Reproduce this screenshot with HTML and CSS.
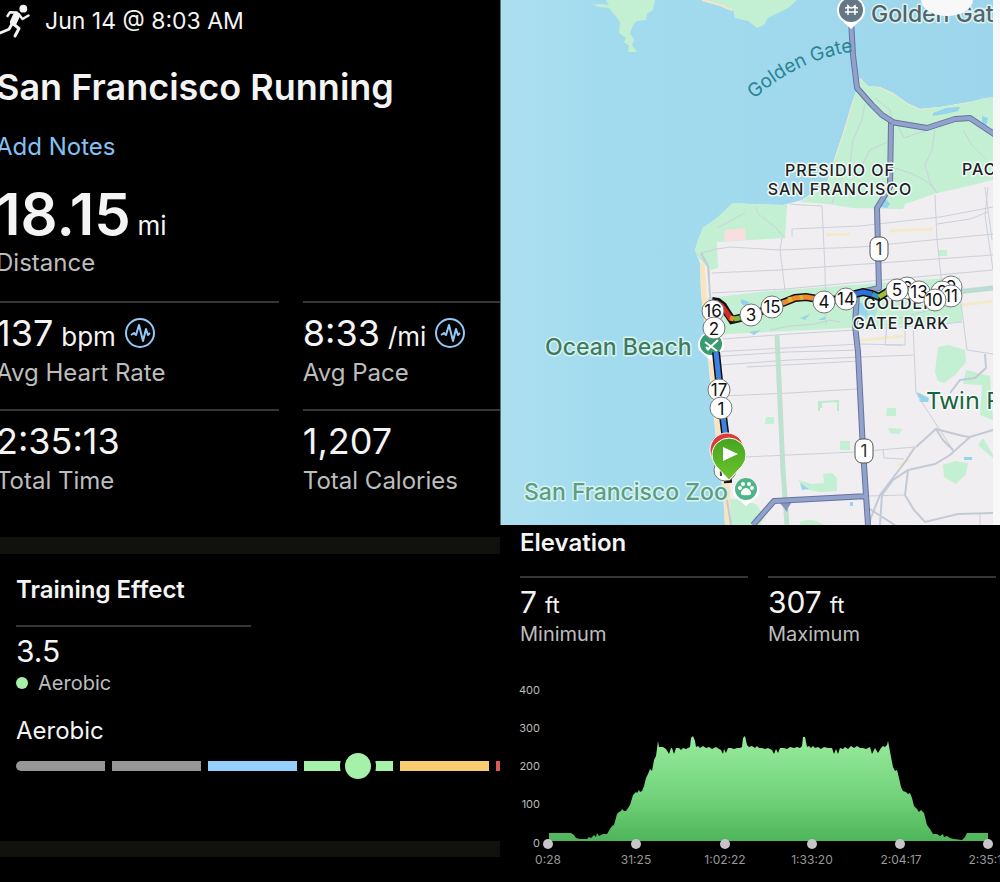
FILE: index.html
```html
<!DOCTYPE html>
<html lang="en">
<head>
    <meta charset="UTF-8">
    <meta name="viewport" content="width=device-width, initial-scale=1.0">
    <title>San Francisco Running</title>
    <link rel="stylesheet" href="styles.css">
</head>
<body>

<div class="page">
    <div class="left">
        <section class="activity">
            <div class="date">
                <svg class="runner" viewBox="0 0 34 38" fill="none" stroke="currentColor" stroke-linecap="round" stroke-linejoin="round">
                    <circle cx="27.3" cy="6.7" r="3.9" fill="currentColor" stroke="none"/>
                    <path d="M20.5 13.5 L17.5 20" stroke-width="7"/>
                    <path d="M11.5 14 L14 10.2 L20.7 10.5" stroke-width="2.4"/>
                    <path d="M23 12.5 L26.5 17 L32.5 13.5" stroke-width="2.4"/>
                    <path d="M16.5 21 L13 27.3 L4 31" stroke-width="2.8"/>
                    <path d="M17.5 22 L23 26.5 L19 34" stroke-width="3"/>
                </svg>
                <span>Jun 14 @ 8:03 AM</span>
            </div>
            <h1>San Francisco Running</h1>
            <a class="notes" href="#">Add Notes</a>
            <div class="distance">18.15 <small>mi</small></div>
            <div class="label">Distance</div>

            <div class="stats">
                <div class="stat">
                    <div class="value">137 <small>bpm</small>
                        <svg class="pulse" viewBox="0 0 32 32">
                            <circle cx="16" cy="16" r="14"/>
                            <path d="M7 18 L10 16 L12 18 L15 8 L19 24 L22 12 L24 18 L26 16"/>
                        </svg>
                    </div>
                    <div class="label">Avg Heart Rate</div>
                </div>
                <div class="stat">
                    <div class="value">8:33 <small>/mi</small>
                        <svg class="pulse" viewBox="0 0 32 32">
                            <circle cx="16" cy="16" r="14"/>
                            <path d="M7 18 L10 16 L12 18 L15 8 L19 24 L22 12 L24 18 L26 16"/>
                        </svg>
                    </div>
                    <div class="label">Avg Pace</div>
                </div>
                <div class="stat">
                    <div class="value">2:35:13</div>
                    <div class="label">Total Time</div>
                </div>
                <div class="stat">
                    <div class="value">1,207</div>
                    <div class="label">Total Calories</div>
                </div>
            </div>
        </section>

        <section class="training">
            <h2>Training Effect</h2>
            <div class="effect">
                <div class="value small">3.5</div>
                <div class="label small"><i class="dot"></i>Aerobic</div>
            </div>
            <h3>Aerobic</h3>
            <div class="gauge">
                <div class="zone first"></div>
                <div class="zone"></div>
                <div class="zone blue"></div>
                <div class="zone green"><i class="knob"></i></div>
                <div class="zone yellow"></div>
                <div class="zone red"></div>
            </div>
        </section>
    </div>

    <div class="right">
        <svg class="map" viewBox="500 0 500 525">
            <defs>
                <linearGradient id="water">
                    <stop offset="0" stop-color="#acdff0"/>
                    <stop offset="0.2" stop-color="#a3dbee"/>
                    <stop offset="1" stop-color="#9dd6ec"/>
                </linearGradient>
                <linearGradient id="pin" x1="0" y1="0" x2="0" y2="1">
                    <stop offset="0" stop-color="#45a51f"/>
                    <stop offset="1" stop-color="#6cc42c"/>
                </linearGradient>
                <clipPath id="coast">
                    <path id="landShape" d="M860 78 L868 86 L880 87 L893 93 L907 103 L920 109 L940 107 L970 102 L985 98 L1000 97 V525 H725 L723 493 L718 460 L713 410 L708 360 L705 327 L701 293 L700 263 L695 250 L698 240 L703 228 L717 218 L733 203 L750 204 L783 205 L802 200 L827 183 L835 157 L843 133 L853 100 L858 86 Z"/>
                </clipPath>
                <path id="gateCurve" d="M754 99 Q800 58 858 51"/>
            </defs>

            <rect x="500" y="0" width="500" height="525" fill="url(#water)"/>

            <!-- headlands -->
            <g class="park">
                <path d="M606 0 L609 5 L600 4 L593 5 L600 7 L609 8 L617 18 L620 22 L619 33 L626 38 L624 42 L629 46 L628 52 L637 52 L632 45 L634 40 L630 33 L633 25 L637 21 L646 20 L647 14 L653 10 L655 0 Z"/>
                <path d="M702 0 L720 5 L733 10 L735 18 L748 21 L757 28 L764 25 L768 18 L780 12 L788 8 L797 0 Z"/>
            </g>
            <path d="M702 0 L720 5 L732 10" fill="none" stroke="#f3e5cf" stroke-width="2"/>

            <use href="#landShape" fill="#f0eef0"/>
            <g clip-path="url(#coast)">
                <g class="park">
                    <path d="M800 202 L827 204 L853 208 L903 209 L905 204 L937 193 L960 188 L993 180 V60 H820 V190 Z"/>
                    <path d="M690 190 H788 L785 238 L717 242 L718 268 L710 270 L690 250 Z"/>
                    <path d="M708 298 L760 292 L960 277 L962 322 L850 328 L706 335 Z"/>
                    <path d="M938 347 L948 345 L965 350 L966 362 L955 375 L944 383 L938 381 L935 372 Z"/>
                    <path d="M966 370 L990 376 L993 420 L980 415 L982 385 L963 384 Z"/>
                    <path d="M943 465 L955 461 L968 463 L966 474 L956 484 L944 477 Z"/>
                    <path d="M798 480 L812 484 L824 483 L823 474 L832 473 L837 478 L837 491 L820 492 L805 489 Z"/>
                    <path d="M723 498 L740 500 L756 504 L765 517 L760 525 H723 Z"/>
                    <path d="M887 408 h9 v8 h-10 Z M888 428 l14 1 -3 5 -9 -1 Z M840 441 h10 v9 h-10 Z M766 417 h8 v7 h-9 Z"/>
                    <path d="M938 250 h9 v6 h-9 Z M978 445 L993 458 V455 L983 438 Z M800 522 Q812 517 824 525 H800 Z"/>
                </g>
                <path d="M819 411 V402 L838 401 V411 M821 402 V408" fill="none" stroke="#bfe9cf" stroke-width="2"/>
                <path d="M725 230 l20 -2 1 12 -22 1 Z" fill="#f8dfdf"/>
                <path d="M853 100 L843 133 L835 157 L827 183 M858 78 L880 87 L893 93 L907 103 L920 109 L970 102" fill="none" stroke="#f3e5cf" stroke-width="2"/>
                <path d="M701 263 L703 293 L708 327 L712 360 L717 410 L722 460 L727 493 V525" fill="none" stroke="#f8e4be" stroke-width="7"/>
                <g fill="#94d4ec">
                    <path d="M933 113 L946 108 L960 107 L958 111 L945 114 L933 116 Z M982 116 l6 2 -2 8 -4 -4 Z M881 207 l4 -9 5 6 -3 4 Z"/>
                    <path d="M917 392 l12 6 -1 4 -8 0 Z M800 483 l9 6 -7 1 Z M850 502 h3 v4 h-3 Z M964 457 h8 v3 h-8 Z M741 299 l8 3 -3 6 -5 -5 Z"/>
                    <path d="M857 299 L866 307 L868 316 L857 314 Z M800 318 l10 -4 -5 6 Z M818 320 l8 -4 -1 4 Z M749 332 l12 -2 -7 5 Z"/>
                    <circle cx="868" cy="310" r="9" opacity="0.5"/>
                </g>
                <g class="yellow-road">
                    <path d="M826 235 L850 234 M890 231 L933 229 M962 305 L993 301 M897 466 L910 460 M855 341 L903 336"/>
                </g>

                <g class="street">
                    <path d="M792 237 V229 L860 226 L940 217 L993 207 M701 253 L717 249 L730 247 L780 250 L860 247 L993 234"/>
                    <path d="M712 273 L780 270 L993 255 M712 293 L785 289 L993 270"/>
                    <path d="M709 340 L790 334 L855 330 L943 324 L962 322 M712 352 L860 344 L903 345"/>
                    <path d="M708 357 L787 352 L860 350 M720 365 L790 360 L913 355 M722 396 L790 393 L857 389"/>
                    <path d="M747 367 L860 361 M745 457 L855 452 L915 447 M868 496 L904 495 M937 224 L970 219 L988 212"/>
                    <path d="M785 290 L780 250 L782 238 M822 206 L825 270 L826 325 M935 195 L937 240 L942 285 M985 187 L992 240"/>
                    <path d="M988 187 L985 215 L993 270 M913 325 L916 393 L936 424 L953 450 L952 455 M958 280 L967 350 L993 354"/>
                    <path d="M883 449 L884 458 L904 459 M980 513 V525 M887 325 L885 345 L905 345 V327"/>
                    <path d="M757 207 Q754 212 765 219 T785 238 M790 204 L802 205 L822 206 M717 228 L745 213 M697 253 L708 266 L710 275"/>
                    <path d="M865 104 L862 120 L853 140 L850 165 L838 185 L832 203 M875 98 L890 110 L892 122 M896 122 L904 138 L918 133 L935 128"/>
                    <path d="M935 130 L932 150 L925 165 L930 182 L937 193 M892 140 L870 150 L862 165 M895 168 Q930 178 937 193 M963 130 L972 145 L987 160"/>
                    <path d="M770 330 L790 326 L815 324 L830 320 L840 322 M900 318 L930 310 L950 305 L960 290"/>
                </g>
                <g class="road">
                    <path d="M985 354 L986 368 L975 378 L960 380 L950 393 M916 447 L937 428 M936 429 L963 436 L970 437 L993 430"/>
                    <path d="M970 437 L950 455 L935 464 L908 470 L893 480 L882 495 L880 525 M915 447 L905 462 L880 495 L868 525"/>
                    <path d="M908 470 L905 495 L914 510 L925 522 L958 514 L993 513 M868 508 L895 525 M936 429 L943 440 L953 450"/>
                    <path d="M727 500 L731 525 M701 253 L708 266 L710 295 L714 340"/>
                </g>
                <path d="M777 335 L783 470 L787 525" fill="none" stroke="#bfe2d0" stroke-width="5"/>
                <path d="M885 300 L993 288" fill="none" stroke="#bcdcd3" stroke-width="5"/>
                <path d="M779 502 L792 502 L788 508 L787 512 L784 508 Z" fill="#8496c2"/>

                <path class="highway-edge" d="M891 122 L890 187 L877 208 L879 288 L857 293 L855 325 L858 352 L863 450 L868 525 M1000 138 L970 118 L955 119 L927 128 L891 122 M868 496 L774 501 L753 525"/>
                <path class="highway" d="M891 122 L890 187 L877 208 L879 288 L857 293 L855 325 L858 352 L863 450 L868 525 M1000 138 L970 118 L955 119 L927 128 L891 122 M868 496 L774 501 L753 525"/>
            </g>
            <path class="highway-edge" d="M851 20 L853 55 L857 88 L872 105 L882 115 L893 122"/>
            <path class="highway" d="M851 20 L853 55 L857 88 L872 105 L882 115 L893 122"/>

            <g class="shield">
                <rect x="870" y="237" width="18" height="24" rx="7"/><text x="879" y="255">1</text>
                <rect x="855" y="439" width="18" height="24" rx="7"/><text x="864" y="457">1</text>
            </g>

            <g class="place">
                <text x="840" y="176">PRESIDIO OF</text>
                <text x="840" y="195">SAN FRANCISCO</text>
                <text x="900" y="309">GOLDEN</text>
                <text x="901" y="329">GATE PARK</text>
                <text class="start" x="962" y="175">PACIFIC</text>
            </g>
            <text class="gate"><textPath href="#gateCurve">Golden Gate</textPath></text>
            <text class="poi bridge" x="871" y="22">Golden Gate</text>
            <text class="poi" x="545" y="355">Ocean Beach</text>
            <text class="poi zoo" x="524" y="500">San Francisco Zoo</text>
            <text class="twin" x="927" y="409">Twin Peaks</text>

            <!-- bridge pin -->
            <path d="M851 29 L840 19 A14 14 0 1 1 862 19 Z" fill="#fff"/>
            <circle cx="851" cy="10" r="12" fill="#647787"/>
            <path d="M848 5 V15 M855 5 V15 M845 8 Q848 8 848 6 Q851 10 855 6 Q855 8 858 8 M845 12 H858" fill="none" stroke="#fff" stroke-width="1.5"/>

            <!-- beach pin -->
            <path d="M711 361 L699 350 A13 13 0 1 1 723 350 Z" fill="#fff"/>
            <circle cx="711" cy="344" r="11" fill="#389b70"/>
            <path d="M705 342 L717 351 M718 340 L707 350 M706 347 L709 350" fill="none" stroke="#fff" stroke-width="2"/>

            <!-- zoo pin -->
            <path d="M746 506 L734 496 A13 13 0 1 1 758 496 Z" fill="#fff"/>
            <circle cx="746" cy="489" r="11" fill="#4fb48a"/>
            <g fill="#fff">
                <path d="M746 488 Q749 488 751 492 Q752 496 746 495 Q740 496 741 492 Q743 488 746 488 Z"/>
                <circle cx="740" cy="488" r="2"/><circle cx="743" cy="484" r="2"/><circle cx="749" cy="484" r="2"/><circle cx="752" cy="488" r="2"/>
            </g>

            <!-- route -->
            <path class="route-edge" d="M716 352 L721 400 L726 440 L728 483 M712 301 L718 302 L723 306 L728 314 L732 320 L740 318 L752 315 L772 307 L785 302 L795 298 L806 297 L824 300 L846 299 L855 294 L863 292 L872 294 L879 297 L887 292 L897 289"/>
            <g class="route">
                <path d="M716 352 L721 400 L726 440 L728 480" stroke="#3c82e6"/>
                <path d="M716 302 L722 306 L727 313 L731 319" stroke="#d52d25"/>
                <path d="M730 318 L734 319" stroke="#ef8f2e"/>
                <path d="M734 319 L740 318" stroke="#83b93f"/>
                <path d="M740 318 L752 315" stroke="#4b82bb"/>
                <path d="M772 307 L785 302" stroke="#78b63a"/>
                <path d="M783 303 L795 298 L806 297 L824 300" stroke="#ef8a2d"/>
                <path d="M788 300 L792 299 M800 298 L803 297" stroke="#dcb83a"/>
                <path d="M846 299 L855 294 L863 292 L872 294" stroke="#2d72dd"/>
                <path d="M872 294 L879 297" stroke="#3997b5"/>
                <path d="M879 297 L887 292 L897 289" stroke="#a2bd36"/>
            </g>

            <g class="mile">
                <circle cx="725" cy="470" r="11"/><text x="725" y="476">18</text>
                <circle cx="713" cy="311" r="11"/><text x="713" y="317">16</text>
                <circle cx="714" cy="328" r="11"/><text x="714" y="335">2</text>
                <circle cx="772" cy="307" r="11"/><text x="772" y="313">15</text>
                <circle cx="751" cy="315" r="11"/><text x="751" y="321">3</text>
                <circle cx="846" cy="299" r="11"/><text x="846" y="305">14</text>
                <circle cx="824" cy="302" r="11"/><text x="824" y="308">4</text>
                <circle cx="907" cy="288" r="11"/><text x="907" y="294">6</text>
                <circle cx="897" cy="290" r="11"/><text x="897" y="296">5</text>
                <circle cx="951" cy="287" r="11"/><text x="951" y="293">9</text>
                <circle cx="942" cy="292" r="11"/><text x="942" y="298">8</text>
                <circle cx="919" cy="292" r="11"/><text x="919" y="298">13</text>
                <circle cx="951" cy="296" r="11"/><text x="951" y="302">11</text>
                <circle cx="935" cy="300" r="11"/><text x="934" y="306">10</text>
                <circle cx="719" cy="390" r="11"/><text x="719" y="396">17</text>
                <circle cx="721" cy="408" r="11"/><text x="721" y="415">1</text>
            </g>

            <!-- finish pin behind the start pin -->
            <path d="M727 476 L715 462 A17 17 0 1 1 739 462 Z" fill="#dd3b3b" stroke="#fff"/>
            <path d="M729 480 L716 466 A17 17 0 1 1 742 466 Z" fill="url(#pin)" stroke="#fff"/>
            <path d="M723 447 L738 454 L723 461 Z" fill="#fff"/>

            <ellipse cx="947" cy="0" rx="26" ry="16" fill="#f8f8f8"/>
            <rect x="993" y="0" width="7" height="525" fill="#f8f8f8"/>
            <rect x="500" y="0" width="1" height="525" fill="#56707a"/>
        </svg>

        <section class="elevation">
            <h2>Elevation</h2>
            <div class="range">
                <div class="stat">
                    <div class="value small">7 <small>ft</small></div>
                    <div class="label small">Minimum</div>
                </div>
                <div class="stat">
                    <div class="value small">307 <small>ft</small></div>
                    <div class="label small">Maximum</div>
                </div>
            </div>
        </section>

        <svg class="chart" viewBox="500 670 500 212">
            <defs>
                <linearGradient id="hill" x1="0" y1="0" x2="0" y2="1">
                    <stop offset="0" stop-color="#99eb9d"/>
                    <stop offset="0.6" stop-color="#70d179"/>
                    <stop offset="1" stop-color="#4eb55a"/>
                </linearGradient>
            </defs>
            <path fill="url(#hill)" d="M549 841 V833 H571 L574 835 L576 838 L580 839 L587 839 L589 837 L591 838 L594 835 L596 837 L597 833 L599 836 L603 834 L607 834 L610 829 L612 826 L614 825 L617 814 L619 812 L621 811 L622 809 L624 811 L626 811 L630 805 L633 795 L636 792 L637 793 L639 790 L640 792 L642 791 L644 786 L646 778 L648 774 L650 769 L652 771 L654 760 L656 756 L658 741 L659 747 L663 747 L666 749 L669 754 L671 748 L672 748 L674 754 L676 748 L679 748 L681 750 L683 748 L686 749 L688 748 L690 747 L691 738 L693 736 L695 741 L696 747 L698 746 L700 748 L703 746 L706 748 L709 747 L712 749 L716 747 L719 749 L721 750 L723 754 L724 749 L726 753 L728 748 L731 748 L734 749 L737 748 L740 748 L742 747 L743 738 L745 736 L747 745 L749 747 L752 746 L755 748 L757 746 L759 748 L762 748 L765 749 L768 748 L772 750 L774 754 L776 749 L778 753 L780 748 L784 748 L787 749 L790 747 L794 748 L797 747 L800 748 L802 746 L803 737 L805 737 L807 747 L809 746 L811 748 L813 746 L815 748 L818 747 L821 749 L824 747 L828 748 L832 748 L834 754 L836 749 L838 754 L840 748 L843 749 L845 747 L848 749 L851 746 L854 748 L857 746 L860 748 L863 748 L866 749 L870 747 L872 754 L875 748 L878 753 L881 748 L883 746 L885 747 L887 745 L888 741 L889 746 L891 757 L893 767 L895 771 L897 770 L899 778 L901 787 L903 791 L906 792 L908 794 L910 793 L912 798 L914 806 L917 809 L919 812 L921 810 L924 813 L927 825 L930 829 L933 834 L937 834 L940 836 L943 834 L944 837 L947 836 L950 838 L954 839 L962 840 L965 837 L967 833 H988 V841 Z"/>
            <g class="tick">
                <circle cx="548" cy="844" r="5"/>
                <circle cx="636" cy="844" r="5"/>
                <circle cx="725" cy="844" r="5"/>
                <circle cx="812" cy="844" r="5"/>
                <circle cx="900" cy="844" r="5"/>
                <circle cx="988" cy="844" r="5"/>
            </g>
            <g class="y-axis">
                <text x="540" y="694">400</text>
                <text x="540" y="732">300</text>
                <text x="540" y="770">200</text>
                <text x="540" y="808">100</text>
                <text x="540" y="847">0</text>
            </g>
            <g class="x-axis">
                <text x="548" y="864">0:28</text>
                <text x="636" y="864">31:25</text>
                <text x="725" y="864">1:02:22</text>
                <text x="812" y="864">1:33:20</text>
                <text x="901" y="864">2:04:17</text>
                <text x="989" y="864">2:35:13</text>
            </g>
        </svg>
    </div>
</div>

</body>
</html>
```
FILE: styles.css
```css
body {
    font-family: Inter, "Liberation Sans", sans-serif;
    margin: 0;
    background: #000;
    color: #f4f4f4;
    overflow: hidden;
}
.page {
    display: grid;
    grid-template-columns: 1fr 1fr;
}
.left, .right {
    min-width: 0;
    overflow: hidden;
}
h1, h2, h3 {
    margin: 0;
}
small {
    line-height: 1;
}

/* Activity */
.activity {
    margin-left: -4px;
    padding-bottom: 20px;
    border-bottom: 17px solid #11110d;
}
.date {
    display: flex;
    align-items: center;
    gap: 15px;
    height: 42px;
    font-size: 23px;
}
.runner {
    width: 34px;
    height: 38px;
}
h1 {
    padding-top: 20px;
    font-size: 36px;
    font-weight: 600;
    line-height: 50px;
}
.notes {
    display: block;
    padding-top: 20px;
    color: #85c1f5;
    font-size: 24px;
    line-height: 30px;
    text-decoration: none;
}
.distance {
    padding-top: 20px;
    font-size: 58px;
    font-weight: 600;
    line-height: 64px;
}
.distance small {
    margin-left: -8px;
    font-size: 26px;
    font-weight: 400;
}
.label {
    color: #bdbdbd;
    font-size: 24px;
    line-height: 32px;
}
.distance + .label {
    line-height: 34px;
}
.stats {
    display: grid;
    grid-template-columns: 1fr 1fr;
    column-gap: 24px;
    width: 117%;
    padding-top: 21px;
}
.stat, .effect {
    border-top: 2px solid #363636;
}
.stats .stat {
    height: 106px;
}
.value {
    display: flex;
    align-items: baseline;
    gap: 8px;
    padding-top: 6px;
    font-size: 36px;
    line-height: 48px;
}
.value small {
    font-size: 26px;
}
.pulse {
    align-self: center;
    width: 32px;
    height: 32px;
    fill: none;
    stroke: #93c9f8;
    stroke-width: 2;
    stroke-linejoin: round;
}

/* Training effect */
.training {
    padding: 18px 0 70px 16px;
    border-bottom: 16px solid #11110d;
}
h2 {
    font-size: 24px;
    font-weight: 600;
    line-height: 36px;
}
.effect {
    width: 48%;
    min-width: 235px;
    margin-top: 17px;
}
.value.small {
    padding-top: 4px;
    font-size: 30px;
    line-height: 40px;
}
.value.small small {
    font-size: 22px;
}
.label.small {
    display: flex;
    align-items: center;
    font-size: 20px;
    line-height: 24px;
}
.dot {
    width: 12px;
    height: 12px;
    margin-right: 10px;
    border-radius: 50%;
    background: #a5f1a9;
}
h3 {
    padding-top: 20px;
    font-size: 24px;
    font-weight: 400;
    line-height: 32px;
}
.gauge {
    display: flex;
    gap: 7px;
    margin-top: 14px;
}
.zone {
    position: relative;
    flex: 0 0 89px;
    height: 10px;
    background: #969696;
}
.zone.first {
    border-radius: 5px 0 0 5px;
}
.zone.blue {
    background: #95cffb;
}
.zone.green {
    background: #a5f1a9;
}
.zone.yellow {
    background: #f8cd72;
}
.zone.red {
    background: #e05a55;
}
.knob {
    position: absolute;
    top: 50%;
    left: 61%;
    width: 26px;
    height: 26px;
    border: 5px solid #000;
    border-radius: 50%;
    background: #a5f1a9;
    transform: translate(-50%, -50%);
}

/* Map */
.map, .chart {
    display: block;
    width: 100%;
}
.park {
    fill: #c3efd3;
}
.street {
    fill: none;
    stroke: #cbd0da;
    stroke-width: 1;
}
.road {
    fill: none;
    stroke: #c3cad6;
    stroke-width: 2;
}
.yellow-road {
    fill: none;
    stroke: #f3e9cb;
    stroke-width: 3;
}
.highway, .highway-edge {
    fill: none;
    stroke: #93a2ca;
    stroke-width: 4;
    stroke-linejoin: round;
}
.highway-edge {
    stroke: #6474a0;
    stroke-width: 6;
}
.shield rect {
    fill: #fff;
    stroke: #555;
}
.shield text {
    fill: #333;
    font-size: 17px;
    text-anchor: middle;
}
.place, .poi, .twin, .gate {
    paint-order: stroke;
    stroke: #f2fbf8;
    stroke-width: 3px;
    stroke-linejoin: round;
}
.place {
    fill: #202124;
    font-size: 16px;
    font-weight: 500;
    letter-spacing: 1px;
    text-anchor: middle;
}
.place .start {
    text-anchor: start;
}
.gate {
    fill: #2b8395;
    stroke: none;
    font-size: 19px;
}
.poi {
    fill: #3d7b63;
    stroke: #d9f3f0;
    font-size: 23px;
    font-weight: 500;
}
.poi.bridge {
    fill: #53636d;
}
.poi.zoo {
    fill: #5a9e86;
}
.twin {
    fill: #1d6240;
    font-family: "Noto Sans", sans-serif;
    font-size: 24px;
}
.route-edge {
    fill: none;
    stroke: #111;
    stroke-width: 8;
}
.route {
    fill: none;
    stroke-width: 5;
}
.mile circle {
    fill: #fff;
    stroke: #777;
}
.mile text {
    fill: #111;
    font-size: 17px;
    text-anchor: middle;
}

/* Elevation */
.elevation {
    padding: 0 4px 24px 20px;
}
.range {
    display: grid;
    grid-template-columns: 1fr 1fr;
    gap: 20px;
    padding-top: 15px;
}
.tick {
    fill: #c8c4c8;
}
.y-axis, .x-axis {
    fill: #bbb;
    font-size: 11px;
    text-anchor: end;
}
.x-axis {
    fill: #999;
    font-size: 12px;
    text-anchor: middle;
}
```
